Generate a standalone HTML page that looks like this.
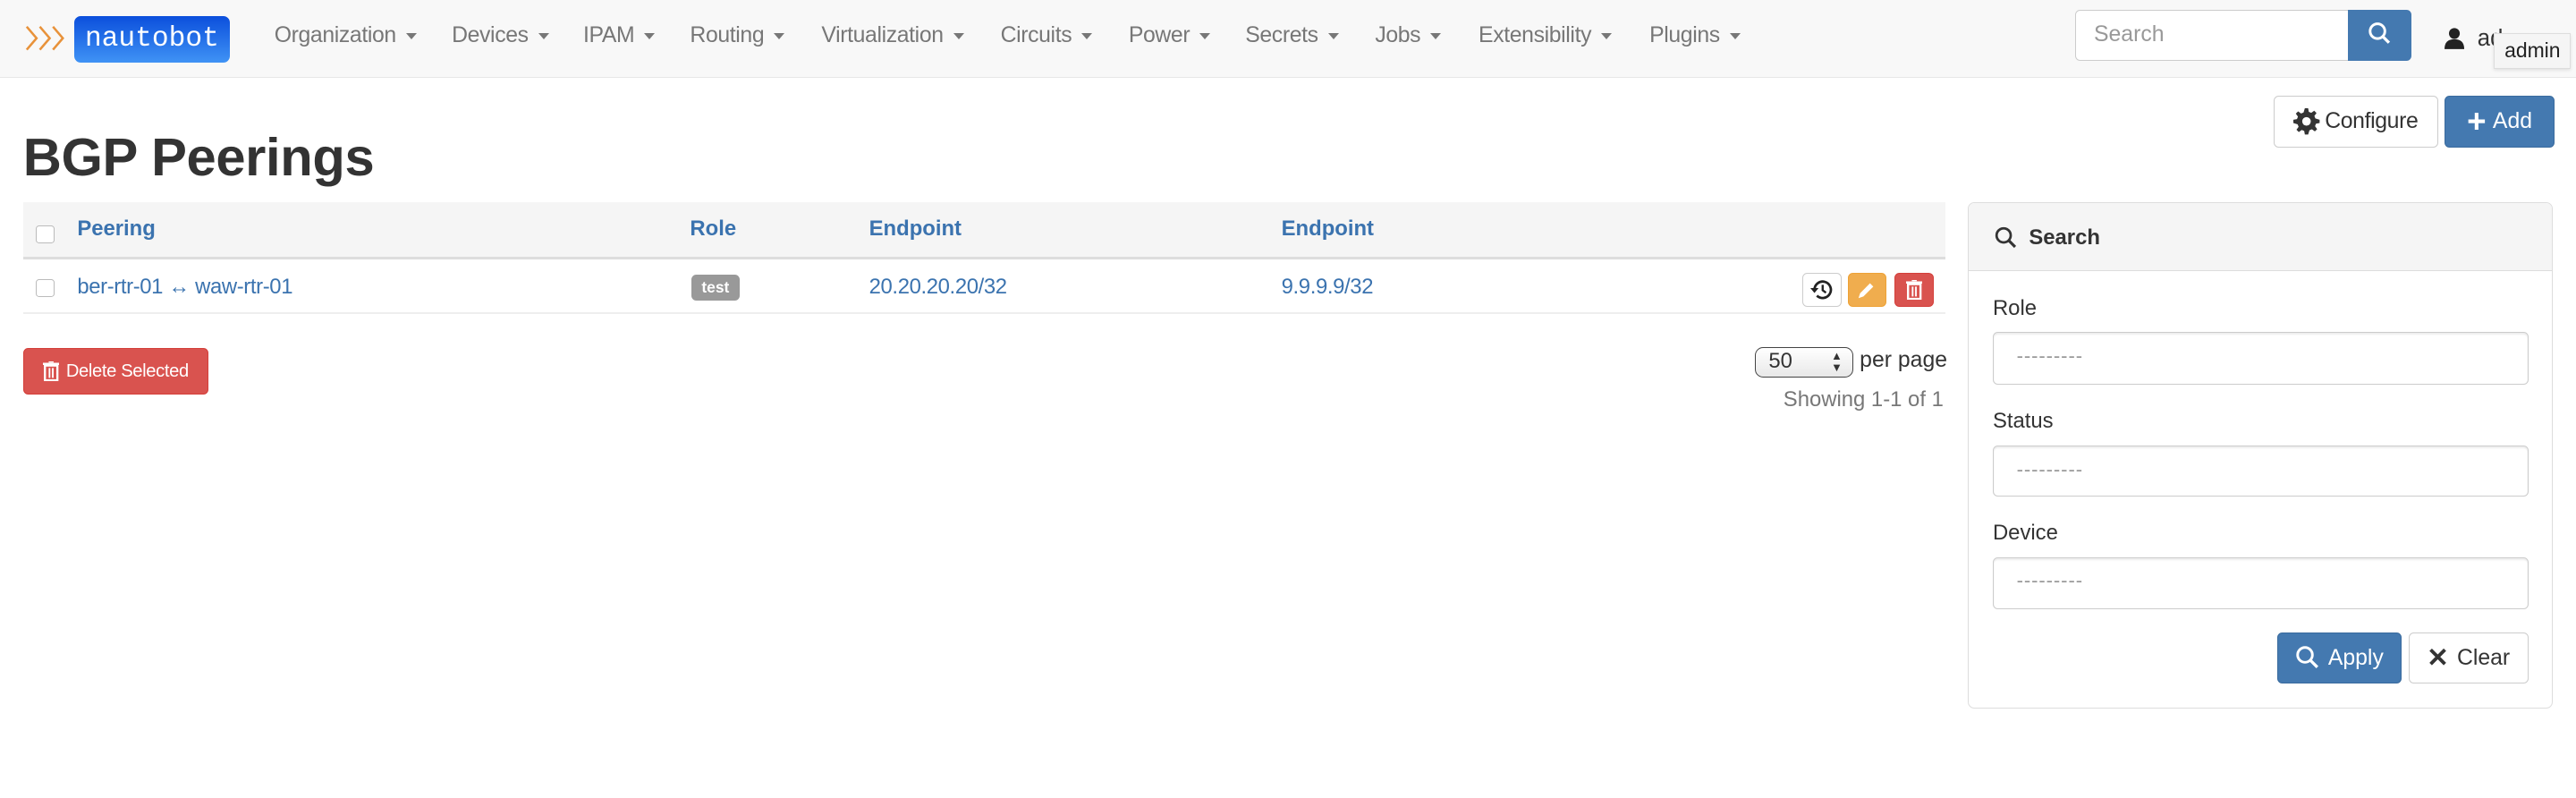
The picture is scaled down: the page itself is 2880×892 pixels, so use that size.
<!DOCTYPE html>
<html><head><meta charset="utf-8"><style>
html,body{margin:0;padding:0;background:#fff;overflow:hidden}
body{width:2880px;height:892px}
#r{zoom:1.83673;width:1568px;height:486px;position:relative;font-family:"Liberation Sans",Arial,sans-serif;font-size:13px;color:#333}
.a{position:absolute}
.nav{left:0;top:0;width:1568px;height:47px;background:#f8f8f8;border-bottom:1px solid #e7e7e7}
.ni{top:14px;font-size:13.5px;color:#777;white-space:nowrap;letter-spacing:-0.2px}
.ni:after{content:"";display:inline-block;margin-left:6px;vertical-align:middle;border-left:3.5px solid transparent;border-right:3.5px solid transparent;border-top:4px solid #777}
.btn{box-sizing:border-box;border-radius:3px;border:1px solid #ccc;background:#fff;display:flex;align-items:center;justify-content:center;font-size:13.5px}
.blue{background:#4479b0;border-color:#3a6b9e;color:#fff}
.inp{box-sizing:border-box;border:1px solid #ccc;border-radius:3px;background:#fff;box-shadow:inset 0 1px 1px rgba(0,0,0,.08);color:#999;padding:7px 0 0 14px;font-size:12px;letter-spacing:0.5px}
.cb{box-sizing:border-box;width:11px;height:11px;border:1px solid #bbb;border-radius:2px;background:#fff}
</style></head><body><div id="r">
<div class="a nav"></div>
<svg class="a" style="left:15px;top:15px" width="28" height="16" viewBox="0 0 28 16"><g fill="none" stroke="#e8923a" stroke-width="1.4"><path d="M1 1l6 7-6 7M9 1l6 7-6 7M17 1l6 7-6 7"/></g></svg>
<div class="a" style="left:45px;top:10px;width:95px;height:28px;border-radius:4px;background:linear-gradient(#0b4fdc,#3f93f5);color:#fff;font-family:'Liberation Mono',monospace;font-size:17px;line-height:28px;text-align:center">nautobot</div>
<div class="a ni" style="left:167px">Organization</div>
<div class="a ni" style="left:275px">Devices</div>
<div class="a ni" style="left:355px">IPAM</div>
<div class="a ni" style="left:420px">Routing</div>
<div class="a ni" style="left:500px">Virtualization</div>
<div class="a ni" style="left:609px">Circuits</div>
<div class="a ni" style="left:687px">Power</div>
<div class="a ni" style="left:758px">Secrets</div>
<div class="a ni" style="left:837px">Jobs</div>
<div class="a ni" style="left:900px">Extensibility</div>
<div class="a ni" style="left:1004px">Plugins</div>
<div class="a" style="left:1263px;top:6px;width:168px;height:31px;box-sizing:border-box;border:1px solid #ccc;border-radius:3px 0 0 3px;background:#fff;color:#999;font-size:13.5px;padding:7px 0 0 11px">Search</div>
<div class="a" style="left:1429px;top:6px;width:39px;height:31px;background:#4479b0;border-radius:0 3px 3px 0"><svg width="39" height="31"><circle cx="18" cy="13" r="4.5" fill="none" stroke="#fff" stroke-width="1.6"/><path d="M21 16l4 4" stroke="#fff" stroke-width="1.8"/></svg></div>
<svg class="a" style="left:1488px;top:17px" width="12" height="13"><circle cx="6" cy="3.5" r="3.3" fill="#222"/><path d="M0 13c0-4 2-6 6-6s6 2 6 6z" fill="#222"/></svg>
<div class="a" style="left:1508px;top:16px;font-size:14px;color:#333">ad</div>
<div class="a" style="left:1518px;top:20px;width:47px;height:22px;background:#f5f5f5;border:1px solid #ddd;box-sizing:border-box;font-size:12.5px;padding-top:3px;text-align:center;color:#222;box-shadow:0 1px 2px rgba(0,0,0,.1)">admin</div>
<div class="a btn" style="left:1384px;top:58px;width:100px;height:32px;letter-spacing:-0.2px"><svg width="16" height="16" viewBox="0 0 16 16" style="margin-right:3px"><path fill="#333" d="M7 0h2l.4 2.2 1.5.6 1.8-1.3 1.4 1.4-1.3 1.8.6 1.5L16 7v2l-2.2.4-.6 1.5 1.3 1.8-1.4 1.4-1.8-1.3-1.5.6L9 16H7l-.4-2.2-1.5-.6-1.8 1.3-1.4-1.4 1.3-1.8-.6-1.5L0 9V7l2.2-.4.6-1.5-1.3-1.8 1.4-1.4 1.8 1.3 1.5-.6z"/><circle cx="8" cy="8" r="2.6" fill="#fff"/></svg>Configure</div>
<div class="a btn blue" style="left:1488px;top:58px;width:67px;height:32px"><span style="font-size:20px;font-weight:bold;margin-right:4px;line-height:1">+</span>Add</div>
<div class="a" style="left:14px;top:77px;font-size:32.5px;font-weight:bold;color:#333;letter-spacing:-0.2px">BGP Peerings</div>
<div class="a" style="left:14px;top:123px;width:1170px;height:33px;background:#f5f5f5;border-bottom:2px solid #ddd"></div>
<div class="a cb" style="left:22px;top:137px"></div>
<div class="a" style="left:47px;top:132px;font-weight:bold;color:#3b73af;font-size:13px">Peering</div>
<div class="a" style="left:420px;top:132px;font-weight:bold;color:#3b73af;font-size:13px">Role</div>
<div class="a" style="left:529px;top:132px;font-weight:bold;color:#3b73af;font-size:13px">Endpoint</div>
<div class="a" style="left:780px;top:132px;font-weight:bold;color:#3b73af;font-size:13px">Endpoint</div>
<div class="a" style="left:14px;top:190px;width:1170px;height:1px;background:#eee"></div>
<div class="a cb" style="left:22px;top:170px"></div>
<div class="a" style="left:47px;top:167px;color:#3b73af;font-size:13px;letter-spacing:-0.2px">ber-rtr-01 ↔ waw-rtr-01</div>
<div class="a" style="left:421px;top:167px;width:29px;height:16px;background:#999;border-radius:3px;color:#fff;font-size:9.5px;font-weight:bold;text-align:center;line-height:16px">test</div>
<div class="a" style="left:529px;top:167px;color:#3b73af;font-size:13px;letter-spacing:-0.2px">20.20.20.20/32</div>
<div class="a" style="left:780px;top:167px;color:#3b73af;font-size:13px;letter-spacing:-0.2px">9.9.9.9/32</div>
<div class="a btn" style="left:1097px;top:166px;width:24px;height:21px"><svg width="14" height="14" viewBox="0 0 14 14"><path d="M2.5 7a5 5 0 1 1 1.5 3.6" fill="none" stroke="#222" stroke-width="1.5"/><path d="M0 6h5L2.5 9z" fill="#222"/><path d="M7.5 4v3.3l2 1.5" fill="none" stroke="#222" stroke-width="1.3"/></svg></div>
<div class="a btn" style="left:1125px;top:166px;width:23px;height:21px;background:#f0ad4e;border-color:#eea236"><svg width="12" height="12"><path d="M1 11l1-3 6-6 2 2-6 6z" fill="#fff"/></svg></div>
<div class="a btn" style="left:1153px;top:166px;width:24px;height:21px;background:#d9534f;border-color:#d43f3a"><svg width="10" height="12"><path d="M0 1.5h10M3.5 0h3" stroke="#fff" stroke-width="1.4"/><rect x="1.2" y="2.5" width="7.6" height="9" fill="none" stroke="#fff" stroke-width="1.3"/><path d="M4 4v6M6 4v6" stroke="#fff"/></svg></div>
<div class="a btn" style="left:14px;top:212px;width:113px;height:28px;background:#d9534f;border-color:#d43f3a;color:#fff;font-size:11px;letter-spacing:-0.2px"><svg width="10" height="12" style="margin-right:4px"><path d="M0 1.5h10M3.5 0h3" stroke="#fff" stroke-width="1.4"/><rect x="1.2" y="2.5" width="7.6" height="9" fill="none" stroke="#fff" stroke-width="1.3"/><path d="M4 4v6M6 4v6" stroke="#fff"/></svg>Delete Selected</div>
<div class="a" style="left:1068px;top:211px;width:60px;height:19px;box-sizing:border-box;border:1px solid #444;border-radius:5px;background:linear-gradient(#fff,#e8e8e8);font-size:13px;padding:1px 0 0 8px">50<span style="position:absolute;right:6px;top:2px;font-size:7px;line-height:7px">▲<br>▼</span></div>
<div class="a" style="left:1132px;top:212px;font-size:13.5px">per page</div>
<div class="a" style="right:385px;top:236px;font-size:13px;color:#777">Showing 1-1 of 1</div>
<div class="a" style="left:1198px;top:123px;width:356px;height:308px;box-sizing:border-box;border:1px solid #ddd;border-radius:4px;overflow:hidden">
<div style="height:41px;background:#f5f5f5;border-bottom:1px solid #ddd"></div></div>
<svg class="a" style="left:1214px;top:138px" width="14" height="14"><circle cx="5.5" cy="5.5" r="4.3" fill="none" stroke="#333" stroke-width="1.5"/><path d="M8.5 8.5l4 4" stroke="#333" stroke-width="1.7"/></svg>
<div class="a" style="left:1235px;top:137px;font-weight:bold;font-size:13px">Search</div>
<div class="a" style="left:1213px;top:180px;font-size:13px">Role</div>
<div class="a inp" style="left:1213px;top:202px;width:326px;height:32px">---------</div>
<div class="a" style="left:1213px;top:249px;font-size:13px">Status</div>
<div class="a inp" style="left:1213px;top:271px;width:326px;height:31px">---------</div>
<div class="a" style="left:1213px;top:317px;font-size:13px">Device</div>
<div class="a inp" style="left:1213px;top:339px;width:326px;height:32px">---------</div>
<div class="a btn blue" style="left:1386px;top:385px;width:76px;height:31px"><svg width="16" height="16" style="margin-right:4px"><circle cx="6" cy="6" r="4.5" fill="none" stroke="#fff" stroke-width="1.6"/><path d="M9 9l4.5 4.5" stroke="#fff" stroke-width="1.8"/></svg>Apply</div>
<div class="a btn" style="left:1466px;top:385px;width:73px;height:31px"><span style="font-weight:bold;font-size:16px;margin-right:5px">✕</span>Clear</div>
</div></body></html>
